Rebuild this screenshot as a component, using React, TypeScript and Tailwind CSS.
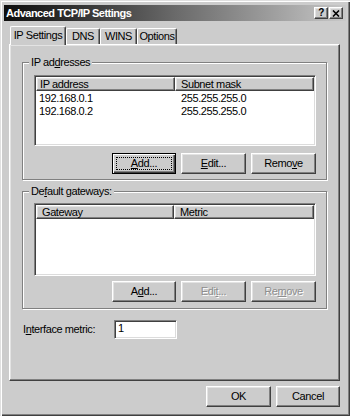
import React from "react";

const raised =
  "border border-t-white border-l-white border-r-[#404040] border-b-[#404040] shadow-[inset_-1px_-1px_0_#808080,inset_1px_1px_0_#e3e3e3]";
const sunken =
  "border border-t-[#808080] border-l-[#808080] border-b-white border-r-white shadow-[inset_1px_1px_0_#404040,inset_-1px_-1px_0_#dcdcdc]";

function Btn({
  children,
  className = "",
  disabled = false,
  def = false,
}: {
  children: React.ReactNode;
  className?: string;
  disabled?: boolean;
  def?: boolean;
}) {
  if (def) {
    return (
      <div
        className={`flex h-[21px] bg-[#cccccc] border border-black shadow-[inset_1px_1px_0_#fff,inset_-1px_-1px_0_#404040,inset_-2px_-2px_0_#808080] p-[3px] ${className}`}
      >
        <div className="flex-1 flex items-center justify-center border border-dotted border-black leading-none">
          {children}
        </div>
      </div>
    );
  }
  return (
    <div
      className={`flex h-[21px] items-center justify-center bg-[#cccccc] leading-none ${raised} ${
        disabled ? "text-[#8e8e8e] [text-shadow:1px_1px_0_#ffffff]" : ""
      } ${className}`}
    >
      {children}
    </div>
  );
}

function Tab({
  children,
  selected = false,
  className = "",
}: {
  children: React.ReactNode;
  selected?: boolean;
  className?: string;
}) {
  return (
    <div
      className={`flex items-center justify-center bg-[#cccccc] border-t border-l border-r border-t-white border-l-white border-r-[#404040] rounded-t-[2px] shadow-[inset_-1px_0_0_#808080] ${
        selected ? "h-[19px] -mb-px relative z-10 pb-[2px]" : "h-[16px]"
      } ${className}`}
    >
      {children}
    </div>
  );
}

function HeaderCell({
  children,
  className = "",
}: {
  children?: React.ReactNode;
  className?: string;
}) {
  return (
    <div
      className={`h-[14px] bg-[#cccccc] leading-[12px] ${raised} ${className}`}
    >
      {children}
    </div>
  );
}

export default function App() {
  return (
    <div className="w-[350px] h-[416px] bg-[#cccccc] p-[4px] shadow-[inset_1px_1px_0_#e0e0e0,inset_2px_2px_0_#ffffff,inset_-1px_-1px_0_#404040,inset_-2px_-2px_0_#808080] font-['Liberation_Sans',Arial,sans-serif] text-[11px] tracking-[-0.4px] text-black">
      {/* Title bar */}
      <div className="mt-[1px] h-[16px] flex items-center bg-linear-to-r from-[#0e0e0e] via-[#6a6a6a] to-[#c8c8c8] pl-[2px] pr-[3px]">
        <div className="flex-1 text-white font-bold text-[11px] leading-none tracking-[-0.5px]">
          Advanced TCP/IP Settings
        </div>
        <div
          className={`w-[14px] h-[12px] bg-[#cccccc] flex items-center justify-center font-bold text-[10px] leading-none ${raised}`}
        >
          ?
        </div>
        <div
          className={`ml-[1px] w-[14px] h-[12px] bg-[#cccccc] flex items-center justify-center ${raised}`}
        >
          <svg width="8" height="7" viewBox="0 0 8 7">
            <path d="M1 0.5 L7 6.5 M7 0.5 L1 6.5" stroke="#000" strokeWidth="1.6" />
          </svg>
        </div>
      </div>

      {/* Tabs */}
      <div className="mt-[5px] h-[18px] flex items-end ml-[6px]">
        <Tab selected className="w-[56px]">
          IP Settings
        </Tab>
        <Tab className="w-[34px]">DNS</Tab>
        <Tab className="w-[37px]">WINS</Tab>
        <Tab className="w-[40px]">Options</Tab>
      </div>

      {/* Panel */}
      <div
        className={`w-[331px] h-[337px] ml-[5px] bg-[#cccccc] px-[12px] pt-[11px] ${raised}`}
      >
        {/* IP addresses group */}
        <fieldset className="border border-[#808080] shadow-[1px_1px_0_#ffffff,inset_1px_1px_0_#ffffff] pl-[11px] pr-[10px] pt-[6px] pb-[5px]">
          <legend className="-ml-[5px] px-[2px] leading-[13px] bg-[#cccccc]">
            IP ad<u>d</u>resses
          </legend>
          <div className={`h-[71px] bg-white p-[1px] flex flex-col ${sunken}`}>
            <div className="flex shrink-0">
              <HeaderCell className="w-[139px] pl-[3px]">IP address</HeaderCell>
              <HeaderCell className="flex-1 pl-[5px]">Subnet mask</HeaderCell>
            </div>
            <div className="flex leading-[13px] mt-[1px]">
              <div className="w-[139px] pl-[3px]">192.168.0.1</div>
              <div className="flex-1 pl-[6px]">255.255.255.0</div>
            </div>
            <div className="flex leading-[13px]">
              <div className="w-[139px] pl-[3px]">192.168.0.2</div>
              <div className="flex-1 pl-[6px]">255.255.255.0</div>
            </div>
          </div>
          <div className="mt-[7px] flex justify-end gap-[5px]">
            <Btn def className="w-[64px]">
              <span>
                <u>A</u>dd...
              </span>
            </Btn>
            <Btn className="w-[65px]">
              <span>
                <u>E</u>dit...
              </span>
            </Btn>
            <Btn className="w-[65px]">
              <span>
                Remo<u>v</u>e
              </span>
            </Btn>
          </div>
        </fieldset>

        {/* Default gateways group */}
        <fieldset className="mt-[5px] border border-[#808080] shadow-[1px_1px_0_#ffffff,inset_1px_1px_0_#ffffff] pl-[11px] pr-[10px] pt-[5px] pb-[6px]">
          <legend className="-ml-[5px] px-[2px] leading-[13px] bg-[#cccccc]">
            De<u>f</u>ault gateways:
          </legend>
          <div className={`h-[73px] bg-white p-[1px] flex flex-col ${sunken}`}>
            <div className="flex shrink-0">
              <HeaderCell className="w-[138px] pl-[5px]">Gateway</HeaderCell>
              <HeaderCell className="flex-1 pl-[5px]">Metric</HeaderCell>
            </div>
          </div>
          <div className="mt-[5px] flex justify-end gap-[5px]">
            <Btn className="w-[64px]">
              <span>
                A<u>d</u>d...
              </span>
            </Btn>
            <Btn disabled className="w-[65px]">
              <span>
                Edi<u>t</u>...
              </span>
            </Btn>
            <Btn disabled className="w-[65px]">
              <span>
                Re<u>m</u>ove
              </span>
            </Btn>
          </div>
        </fieldset>

        {/* Interface metric */}
        <div className="mt-[11px] flex items-center">
          <div className="w-[92px] pl-[1px]">
            I<u>n</u>terface metric:
          </div>
          <div
            className={`w-[63px] h-[19px] bg-white pl-[3px] leading-[15px] ${sunken}`}
          >
            1
          </div>
        </div>
      </div>

      {/* Bottom buttons */}
      <div className="w-[331px] ml-[5px] mt-[5px] flex justify-end gap-[5px]">
        <Btn className="w-[65px]">OK</Btn>
        <Btn className="w-[64px]">Cancel</Btn>
      </div>
    </div>
  );
}
